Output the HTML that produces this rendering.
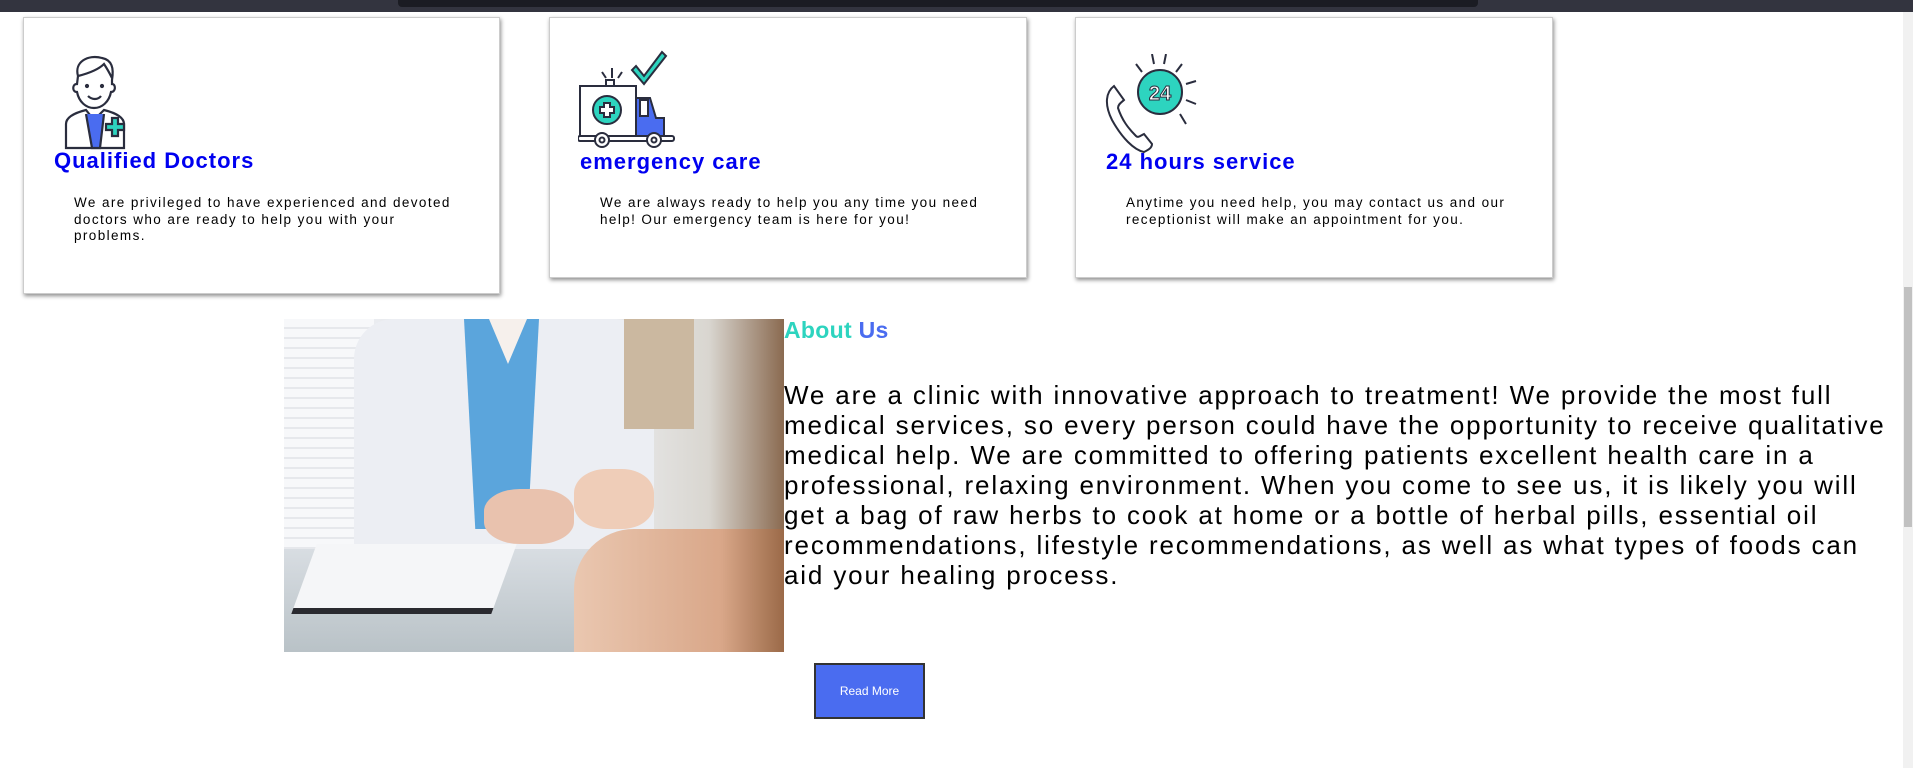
<!DOCTYPE html>
<html><head><meta charset="utf-8"><style>
*{margin:0;padding:0;box-sizing:border-box}
body{width:1913px;height:768px;background:#fff;position:relative;overflow:hidden;font-family:"Liberation Sans",sans-serif;color:#000}
.top{position:absolute;left:0;top:0;width:1913px;height:12px;background:#33343f}
.top .mid{position:absolute;left:398px;top:0;width:1080px;height:7px;background:#1b1c23;border-radius:0 0 4px 4px}
.card{position:absolute;top:17px;background:#fff;border:1px solid #ccc;box-shadow:1px 2px 4px rgba(0,0,0,.45)}
.card h3{position:absolute;left:30px;top:130px;font-size:22px;font-weight:bold;color:#0000f0;white-space:nowrap;letter-spacing:1px}
.card p{position:absolute;left:50px;top:177px;font-size:13.5px;line-height:16.5px;white-space:nowrap;letter-spacing:1.4px}
.card svg{position:absolute}
.scroll{position:absolute;right:0;top:12px;width:10px;height:756px;background:#f1f1f1}
.scroll .th{position:absolute;left:1px;top:275px;width:8px;height:240px;background:#c1c1c1}
.about{position:absolute;left:784px;top:317px;font-size:23px;font-weight:bold;letter-spacing:.3px}
.txt{position:absolute;left:784px;top:380px;font-size:26px;line-height:30px;white-space:nowrap;letter-spacing:1.85px}
.btn{position:absolute;left:814px;top:663px;width:111px;height:56px;background:#4a6cf0;border:2px solid #333;color:#fff;font-size:12px;text-align:center;line-height:52px}
.img{position:absolute;left:284px;top:319px;width:500px;height:333px;overflow:hidden;background:linear-gradient(90deg,#f3f4f6 0%,#e9ebef 20%,#eef0f4 60%,#d9d6d0 85%,#8a6a50 100%)}
</style></head><body>
<div class="top"><div class="mid"></div></div>
<div class="scroll"><div class="th"></div></div>

<div class="card" style="left:23px;width:477px;height:277px">
<svg style="left:40px;top:36px" width="80" height="96" viewBox="0 0 80 96" fill="none" stroke="#2a2d3e" stroke-width="2.2">
<path d="M14 22 C10 8 24 0 38 4 C48 6 50 14 48 26 L48 30 C52 30 52 38 47 38 C45 48 38 54 30 54 C22 54 15 48 13 38 C8 38 8 30 13 30 Z" fill="#fff"/>
<path d="M14 22 C22 20 34 16 40 10 C44 16 46 20 48 24"/>
<circle cx="23" cy="32" r="1" fill="#2a2d3e"/><circle cx="38" cy="32" r="1" fill="#2a2d3e"/>
<path d="M24 42 C28 46 34 46 37 42"/>
<path d="M2 94 L2 70 C2 62 14 58 22 56 L30 66 L40 56 C48 58 60 62 60 70 L60 94 Z" fill="#fff"/>
<path d="M22 60 L28 94 L36 94 L40 60" fill="#4a6cf0"/>
<path d="M42 70 h6 v-6 h6 v6 h6 v6 h-6 v6 h-6 v-6 h-6 z" fill="#2dd4bf"/>
</svg>
<h3>Qualified Doctors</h3>
<p>We are privileged to have experienced and devoted<br>doctors who are ready to help you with your<br>problems.</p>
</div>

<div class="card" style="left:549px;width:478px;height:261px">
<svg style="left:28px;top:30px" width="104" height="100" viewBox="0 0 104 100" fill="none" stroke="#2a2d3e" stroke-width="2">
<path d="M58 18 L66 28 L84 4 L88 8 L66 36 L54 22 Z" fill="#2dd4bf"/>
<path d="M34 20 v10 M24 24 l4 6 M44 24 l-4 6"/>
<rect x="28" y="32" width="8" height="6" fill="#fff"/>
<rect x="2" y="38" width="56" height="50" fill="#fff"/>
<circle cx="29" cy="62" r="14" fill="#2dd4bf"/>
<path d="M26 55 h6 v4 h4 v6 h-4 v4 h-6 v-4 h-4 v-6 h4 z" fill="#fff"/>
<path d="M58 50 h14 l6 20 h8 v18 h-28 z" fill="#4a6cf0"/>
<path d="M62 52 h8 v16 h-8 z" fill="#fff"/>
<rect x="0" y="88" width="96" height="5" rx="2" fill="#fff"/>
<circle cx="24" cy="92" r="7" fill="#fff"/><circle cx="24" cy="92" r="2.5"/>
<circle cx="76" cy="92" r="7" fill="#fff"/><circle cx="76" cy="92" r="2.5"/>
</svg>
<h3 style="top:131px">emergency care</h3>
<p style="top:177px">We are always ready to help you any time you need<br>help! Our emergency team is here for you!</p>
</div>

<div class="card" style="left:1075px;width:478px;height:261px">
<svg style="left:28px;top:36px" width="106" height="100" viewBox="0 0 106 100" fill="none" stroke="#2a2d3e" stroke-width="2">
<path d="M10 32 C2 38 0 50 8 66 C18 84 30 96 40 98 C44 96 48 94 48 90 L40 80 C36 82 34 84 32 82 C24 74 18 66 14 54 C14 50 18 48 20 46 Z" fill="#fff"/>
<circle cx="56" cy="38" r="22" fill="#2dd4bf"/>
<text x="56" y="46" text-anchor="middle" font-family="Liberation Sans" font-weight="bold" font-size="20" fill="#fff" stroke="#2a2d3e" stroke-width="1">24</text>
<path d="M48 0 l2 10 M62 0 l-2 10 M32 10 l6 8 M78 10 l-6 8 M82 30 l10 -3 M82 46 l10 4 M76 60 l6 10"/>
</svg>
<h3 style="top:131px">24 hours service</h3>
<p style="top:177px">Anytime you need help, you may contact us and our<br>receptionist will make an appointment for you.</p>
</div>

<div class="img">
<div style="position:absolute;left:0;top:0;width:90px;height:333px;background:repeating-linear-gradient(180deg,#f7f8fa 0 8px,#e6e8ec 8px 10px)"></div>
<div style="position:absolute;left:70px;top:0;width:300px;height:260px;background:#eceef3;border-radius:40px 40px 0 0"></div>
<div style="position:absolute;left:180px;top:0;width:75px;height:210px;background:#5ba5dc;clip-path:polygon(0 0,100% 0,85% 100%,15% 100%)"></div>
<div style="position:absolute;left:205px;top:0;width:38px;height:45px;background:#f6f0ec;clip-path:polygon(0 0,100% 0,50% 100%)"></div>
<div style="position:absolute;left:340px;top:0;width:70px;height:110px;background:#cbb8a0"></div>
<div style="position:absolute;left:0;top:230px;width:500px;height:103px;background:linear-gradient(180deg,#d8dde2,#b9c2c7)"></div>
<div style="position:absolute;left:20px;top:225px;width:200px;height:70px;background:#f5f6f8;transform:skewX(-20deg);border-bottom:6px solid #2a2a30"></div>
<div style="position:absolute;left:200px;top:170px;width:90px;height:55px;background:#e9c2ae;border-radius:40%"></div>
<div style="position:absolute;left:290px;top:150px;width:80px;height:60px;background:#efcdb8;border-radius:40%"></div>
<div style="position:absolute;left:290px;top:210px;width:210px;height:123px;background:linear-gradient(90deg,#eac7b0,#d9a789 70%,#9b6a48);border-radius:60px 0 0 0"></div>
</div>

<div class="about"><span style="color:#2dd4bf">About</span> <span style="color:#4a6cf0">Us</span></div>
<div class="txt">We are a clinic with innovative approach to treatment! We provide the most full<br>medical services, so every person could have the opportunity to receive qualitative<br>medical help. We are committed to offering patients excellent health care in a<br>professional, relaxing environment. When you come to see us, it is likely you will<br>get a bag of raw herbs to cook at home or a bottle of herbal pills, essential oil<br>recommendations, lifestyle recommendations, as well as what types of foods can<br>aid your healing process.</div>
<div class="btn">Read More</div>
</body></html>
